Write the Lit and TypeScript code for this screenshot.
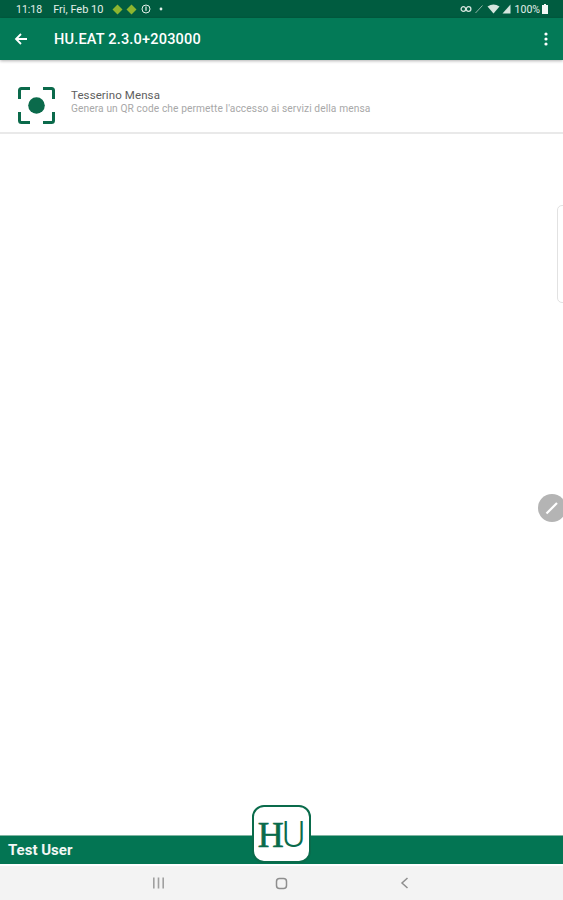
import { LitElement, html, css } from 'lit';
import { customElement } from 'lit/decorators.js';

@customElement('app-root')
export class AppRoot extends LitElement {
  static styles = css`
    :host {
      display: block;
      font-family: Roboto, 'Liberation Sans', sans-serif;
    }

    .page {
      position: relative;
      height: 900px;
      overflow: hidden;
      display: flex;
      flex-direction: column;
      background: #fff;
    }

    .status {
      height: 18px;
      flex: none;
      background: #005c40;
      color: #e3efe9;
      font-size: 10.5px;
      display: flex;
      align-items: center;
      padding: 0 15px 0 16px;
    }

    .status .date {
      margin-left: 11px;
      font-size: 11px;
    }

    .status .icons {
      display: flex;
      align-items: center;
      gap: 3px;
      margin-left: 9px;
    }

    .status .right {
      margin-left: auto;
      display: flex;
      align-items: center;
      gap: 2px;
    }

    .appbar {
      height: 42px;
      flex: none;
      background: #037a57;
      color: #fff;
      display: flex;
      align-items: center;
      padding: 0 15px 0 14px;
      box-shadow: 0 1px 3px rgba(0, 0, 0, 0.3);
      position: relative;
    }

    .title {
      margin-left: 26px;
      font-size: 14.5px;
      font-weight: 500;
      letter-spacing: 0.2px;
    }

    .appbar .more {
      margin-left: auto;
    }

    .item {
      height: 73px;
      box-sizing: border-box;
      margin-top: 1px;
      flex: none;
      display: flex;
      align-items: center;
      padding: 17px 18px 0;
      gap: 16px;
      border-bottom: 2px solid #e9e9e9;
    }

    .item .text {
      display: flex;
      flex-direction: column;
      gap: 1px;
      margin-top: -7px;
    }

    .item .name {
      font-size: 11.5px;
      line-height: 14px;
      color: #5e5e5e;
      letter-spacing: 0.1px;
    }

    .item .desc {
      font-size: 10.2px;
      line-height: 12px;
      color: #a8a8a8;
      letter-spacing: 0.1px;
    }

    .spacer {
      flex: 1;
    }

    .userbar {
      height: 29px;
      flex: none;
      background: #037553;
      color: #f2f7f5;
      display: flex;
      align-items: center;
      padding-left: 8px;
      font-size: 15px;
      font-weight: 700;
      border-top: 1px solid #7fb5a2;
      box-sizing: border-box;
    }

    .navbar {
      height: 34px;
      margin-top: 2px;
      flex: none;
      background: #f3f3f3;
      display: grid;
      grid-template-columns: 1fr 1fr 1fr;
      align-items: center;
      justify-items: center;
      padding: 0 97px;
    }

    .handle {
      position: absolute;
      right: -6px;
      top: 205px;
      width: 10px;
      height: 96px;
      border: 1.5px solid #e2e2e2;
      border-radius: 5px;
      background: #fff;
    }

    .edit {
      position: absolute;
      left: 538px;
      top: 494px;
      width: 28px;
      height: 28px;
      border-radius: 50%;
      background: #b4b4b4;
      display: flex;
      align-items: center;
      justify-content: center;
    }

    .logo {
      position: absolute;
      left: 252px;
      top: 805px;
      width: 59px;
      height: 58px;
      box-sizing: border-box;
      background: #fff;
      border: 2px solid #0a6b4b;
      border-radius: 12px;
      display: flex;
      align-items: center;
      justify-content: center;
      padding-top: 2px;
      color: #0a6b4b;
      line-height: 1;
    }

    .logo .h {
      font-family: 'Liberation Serif', serif;
      font-size: 36px;
      font-weight: 400;
      letter-spacing: -2px;
      -webkit-text-stroke: 0.6px #0a6b4b;
    }

    .logo .u {
      font-family: Roboto, 'Liberation Sans', sans-serif;
      font-size: 36px;
      font-weight: 300;
    }
  `;

  render() {
    return html`
      <div class="page">
        <div class="status">
          <span>11:18</span>
          <span class="date">Fri, Feb 10</span>
          <span class="icons">
            <svg width="11" height="11" viewBox="0 0 11 11"><path d="M5.5 0.5 10.5 5.5 5.5 10.5 0.5 5.5Z" fill="#8db52f"/></svg>
            <svg width="11" height="11" viewBox="0 0 11 11"><path d="M5.5 0.5 10.5 5.5 5.5 10.5 0.5 5.5Z" fill="#8db52f"/></svg>
            <svg width="10" height="10" viewBox="0 0 10 10" style="margin-left:1px"><circle cx="5" cy="5" r="4" fill="none" stroke="#e3efe9" stroke-width="1"/><path d="M5 2.6V6.8" stroke="#e3efe9" stroke-width="1.2"/></svg>
            <svg width="8" height="10" viewBox="0 0 8 10" style="margin-left:3px"><circle cx="4" cy="5" r="1.4" fill="#e3efe9"/></svg>
          </span>
          <span class="right">
            <svg width="12" height="8" viewBox="0 0 12 8"><circle cx="3.4" cy="4" r="2.3" fill="none" stroke="#d5e5de" stroke-width="1.3"/><circle cx="8.6" cy="4" r="2.3" fill="none" stroke="#d5e5de" stroke-width="1.3"/></svg>
            <svg width="10" height="10" viewBox="0 0 10 10" style="margin:0 1px 0 0"><path d="M1.5 9 8.5 1.5" stroke="#8fb5a6" stroke-width="1"/></svg>
            <svg width="13" height="10" viewBox="0 0 13 10"><path d="M0.5 2.5Q6.5 -1.5 12.5 2.5L6.5 9.5Z" fill="#d5e5de"/></svg>
            <svg width="9" height="10" viewBox="0 0 9 10" style="margin-right:2px"><path d="M8.5 0.5V9.5H0.5Z" fill="#d5e5de"/></svg>
            <span>100%</span>
            <svg width="6" height="10" viewBox="0 0 6 10"><path d="M2 0H4V1H6V10H0V1H2Z" fill="#f2f7f5"/></svg>
          </span>
        </div>

        <div class="appbar">
          <svg width="14" height="14" viewBox="0 0 14 14" fill="none" stroke="#fff" stroke-width="1.8">
            <path d="M13 7H2M7 2 2 7 7 12"/>
          </svg>
          <span class="title">HU.EAT 2.3.0+203000</span>
          <svg class="more" width="4" height="14" viewBox="0 0 4 14" fill="#fff">
            <circle cx="2" cy="2" r="1.6"/><circle cx="2" cy="7" r="1.6"/><circle cx="2" cy="12" r="1.6"/>
          </svg>
        </div>

        <div class="item">
          <svg width="37" height="37" viewBox="0 0 37 37" fill="none" stroke="#0b6a4b" stroke-width="3">
            <path d="M1.5 12V3.5Q1.5 1.5 3.5 1.5H12M25 1.5H33.5Q35.5 1.5 35.5 3.5V12M35.5 25V33.5Q35.5 35.5 33.5 35.5H25M12 35.5H3.5Q1.5 35.5 1.5 33.5V25"/>
            <circle cx="18.5" cy="18.5" r="8.3" fill="#0b6a4b" stroke="none"/>
          </svg>
          <div class="text">
            <span class="name">Tesserino Mensa</span>
            <span class="desc">Genera un QR code che permette l'accesso ai servizi della mensa</span>
          </div>
        </div>

        <div class="spacer"></div>

        <div class="userbar">Test User</div>

        <div class="navbar">
          <svg width="13" height="12" viewBox="0 0 13 12" fill="#a0a0a0">
            <rect x="1" y="0.5" width="1.6" height="11"/><rect x="5.7" y="0.5" width="1.6" height="11"/><rect x="10.4" y="0.5" width="1.6" height="11"/>
          </svg>
          <svg width="13" height="13" viewBox="0 0 13 13" fill="none" stroke="#8e8e8e" stroke-width="1.5">
            <rect x="1.5" y="1.5" width="10" height="10" rx="3"/>
          </svg>
          <svg width="9" height="12" viewBox="0 0 9 12" fill="none" stroke="#8e8e8e" stroke-width="1.5">
            <path d="M7.5 1 2 6 7.5 11"/>
          </svg>
        </div>

        <div class="handle"></div>

        <div class="edit">
          <svg width="16" height="16" viewBox="0 0 16 16" fill="none" stroke="#fff" stroke-width="2.2">
            <path d="M2.5 13.5 13 3"/>
          </svg>
        </div>

        <div class="logo"><span class="h">H</span><span class="u">U</span></div>
      </div>
    `;
  }
}
